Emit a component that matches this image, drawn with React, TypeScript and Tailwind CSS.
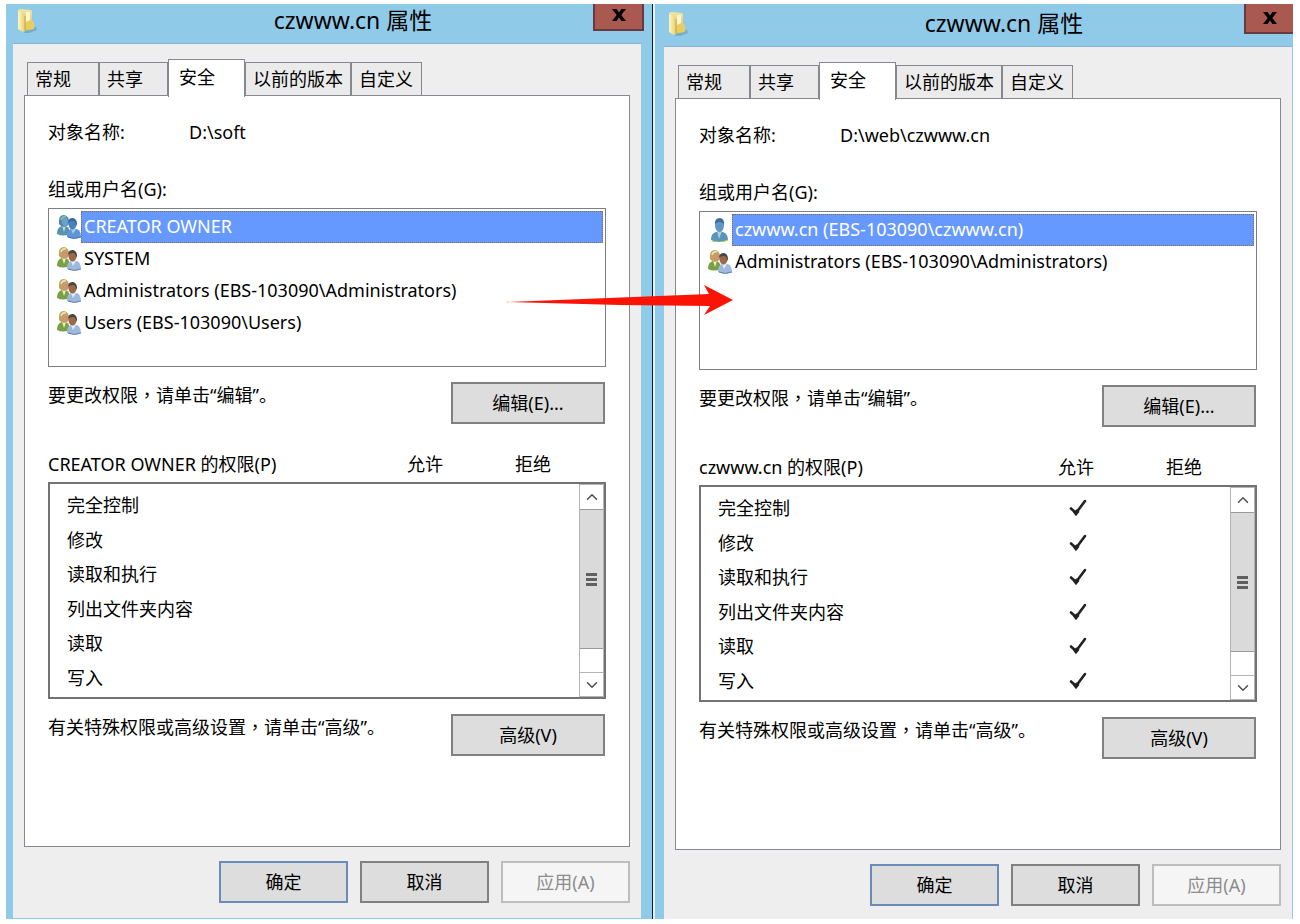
import React from "react";
import { ChevronDown, ChevronUp } from "lucide-react";
import clsx from "clsx";

const tabs = [
  { name: "常规", style: "w-[72px]" },
  { name: "共享", style: "w-[69px]" },
  { name: "安全", style: "w-[77px]" },
  { name: "以前的版本", style: "w-[106px]" },
  { name: "自定义", style: "w-[71px]" },
];

const permissions = ["完全控制", "修改", "读取和执行", "列出文件夹内容", "读取", "写入"];

function Folder() {
  return (
    <svg viewBox="0 0 20 26" className="w-5 h-[26px] mt-1 shrink-0">
      <defs>
        <linearGradient id="folderFront" x1="0" x2="1">
          <stop offset="0" stopColor="#fdf7c4" />
          <stop offset="1" stopColor="#e6cf6c" />
        </linearGradient>
        <linearGradient id="folderBack" x1="0" x2="0" y1="0" y2="1">
          <stop offset="0" stopColor="#f2e6a4" />
          <stop offset="1" stopColor="#d9b84a" />
        </linearGradient>
      </defs>
      <path d="M9 21 L19 19 L20 22 L12 25 L7 25Z" fill="#5b8fae" opacity=".5" />
      <path d="M1 3 Q1 1 3 1 L14 2 Q15 2 15 4 L15 13 L17 14 L17 21 L6 23 L1 21Z" fill="url(#folderBack)" />
      <path d="M9 4 L13 4 L13 12 L9 14Z" fill="#fbf6cf" />
      <path d="M1 3 L6 5 Q8 6 8 8 L8 22 L6 24 L1 21Z" fill="url(#folderFront)" />
      <path d="M8 8 L8 22" stroke="#c9a844" strokeWidth="1" />
      <path d="M9 15 L14 13 L17 14 L17 21 L9 22Z" fill="#e9cd62" />
    </svg>
  );
}

function Group({ faded }: { faded?: boolean }) {
  return (
    <svg viewBox="0 0 24 24" className="w-6 h-6 shrink-0">
      <path d="M0 19 Q0 12 5 11 L9 11 Q13 13 13 19 Q6 22 0 19Z" fill={faded ? "#5b93ac" : "#7a9f45"} />
      <path d="M5 11 L7 17 L9 11Z" fill={faded ? "#b5d6e8" : "#e9efd0"} />
      <path d="M2 9 Q1 0 7 0 Q13 1 12 9 Q10 12 7 12 Q4 12 2 9Z" fill={faded ? "#5088a8" : "#bfa45c"} />
      <ellipse cx="8" cy="7" rx="3" ry="4" fill={faded ? "#6ba2cc" : "#c99872"} />
      <path d="M4 5 Q5 1 9 2" fill="none" stroke={faded ? "#93c2a8" : "#f0e6b4"} strokeWidth="1.500" />
      <path d="M10 22 Q10 15 14 14 L20 14 Q24 16 24 22 Q17 25 10 22Z" fill={faded ? "#5d95d8" : "#9db9e0"} />
      <path d="M11 22 Q17 25 24 22" fill="none" stroke={faded ? "#3f74b4" : "#6480a8"} strokeWidth="1" />
      <path d="M14 14 L16 19 L19 14Z" fill={faded ? "#a4cdf2" : "#e6eefa"} />
      <ellipse cx="15.500" cy="9" rx="4" ry="5.500" fill={faded ? "#4a82bd" : "#9a6a4c"} />
      <path d="M11 8 Q11 3 16 3 Q20 4 20 9 L19 11 Q19 6 16 6 Q12 6 11 8Z" fill={faded ? "#33689c" : "#4a4540"} />
    </svg>
  );
}

function User() {
  return (
    <svg viewBox="0 0 24 24" className="w-6 h-6 shrink-0">
      <path d="M3 22 Q3 15 8 14 L15 14 Q20 16 20 22 Q11 26 3 22Z" fill="#5b95b8" />
      <path d="M4 23 Q11 26 20 22" fill="none" stroke="#a5d84a" strokeWidth="1" />
      <path d="M9 13 L11 21 L14 13Z" fill="#a9d0e8" />
      <ellipse cx="11.500" cy="7.500" rx="4.500" ry="6.500" fill="#5f97c4" />
      <path d="M7 7 Q6 0 12 0 Q17 1 16 7 Q15 4 11 4 Q8 4 7 7Z" fill="#3f6f96" />
    </svg>
  );
}

function Check() {
  return (
    <svg viewBox="0 0 18 18" className="w-[18px] h-[18px] mx-auto" role="img" aria-label="允许">
      <path d="M2 9.500 L7 14 L16 2" fill="none" stroke="#222" strokeWidth="2.600" strokeLinecap="round" />
      <path d="M5.500 12 L7 14 L9 11.500" fill="none" stroke="#222" strokeWidth="4" />
    </svg>
  );
}

// the full-width comma sits in the middle of its cell
function Comma() {
  return <span className="font-['Noto_Sans_CJK_TC',sans-serif]">，</span>;
}

type DialogProps = {
  id: string;
  path: string;
  users: { name: string; icon: React.ReactNode }[];
  allowed: boolean;
  owner: string;
  className: string;
  header: string;
  close: string;
};

function Dialog({ id, path, users, allowed, owner, className, header, close }: DialogProps) {
  return (
    <section className={clsx("flex-1 flex flex-col overflow-hidden bg-[#90cae9]", className)}>
      <header className={clsx("flex items-start pl-1", header)}>
        <Folder />
        <h1 className="flex-1 pl-[76px] text-center text-[23px] leading-8">czwww.cn 属性</h1>
        <button
          aria-label="关闭"
          className={clsx("w-[51px] -mr-[3px] flex justify-center border-2 border-t-0 border-[#673a41] bg-[#a9594f]", close)}
        >
          <svg viewBox="0 0 14 12" className="w-[14px] h-3">
            <path d="M0 0h4.500l2.500 3.500L9.500 0H14L9.300 6 14 12H9.500L7 8.400 4.500 12H0l4.700-6z" fill="#000" />
          </svg>
        </button>
      </header>

      <div className="flex-1 bg-[#eeeeee] border-t border-[#8fb1d0] px-[11px] pt-[15px] pb-[13px]">
        <div role="tablist" className="flex items-end pl-[3px]">
          {tabs.map((tab) => (
            <button
              key={tab.name}
              role="tab"
              aria-selected={tab.name === "安全"}
              className={clsx(
                "border border-b-0 border-[#85888f] text-left whitespace-nowrap",
                tab.style,
                tab.name === "安全"
                  ? "relative z-10 h-[38px] -mb-[2px] pl-[10px] pb-1 bg-white"
                  : "h-[33px] pl-[7px] bg-[#ebebeb]"
              )}
            >
              {tab.name}
            </button>
          ))}
        </div>

        <div className="border border-[#85888f] bg-white pt-6 px-[23px] pb-[90px]">
          <div className="flex">
            <p className="w-[141px]">对象名称:</p>
            <p>{path}</p>
          </div>

          <p id={id + "-users"} className="mt-[33px]">组或用户名(G):</p>
          <ul role="listbox" aria-labelledby={id + "-users"} className="h-[159px] mt-[7px] py-[2px] pl-2 pr-[2px] border border-[#7c7f86]">
            {users.map((user, i) => (
              <li key={user.name} role="option" aria-selected={i === 0} className="flex items-center h-[32px]">
                {user.icon}
                <span
                  className={clsx(
                    "flex-1 h-full pl-[2px] border border-dotted leading-[29px]",
                    i === 0 ? "bg-[#6699ff] border-[#8a6a50] text-white" : "border-transparent"
                  )}
                >
                  {user.name}
                </span>
              </li>
            ))}
          </ul>

          <div className="flex justify-between items-start mt-[15px] pr-[1px]">
            <p>要更改权限<Comma />请单击“编辑”。</p>
            <button className="w-[154px] h-[42px] border-2 border-[#808080] bg-[#dddddd]">编辑(E)...</button>
          </div>

          <div className="flex mt-7 pr-[19px]">
            <p id={id + "-perms"} className="flex-1">{owner} 的权限(P)</p>
            <p className="w-[108px] text-center">允许</p>
            <p className="w-[108px] text-center">拒绝</p>
          </div>
          <div className="flex h-[217px] mt-[6px] border-2 border-[#717377]">
            <table aria-labelledby={id + "-perms"} className="flex-1 h-[207px] mt-1 table-fixed">
              <tbody className="flex flex-col h-full">
                {permissions.map((permission) => (
                  <tr key={permission} className="flex flex-1 items-center">
                    <th scope="row" className="flex-1 pl-[17px] text-left font-normal">{permission}</th>
                    <td className="w-[108px]">{allowed && <Check />}</td>
                    <td className="w-[98px]" />
                  </tr>
                ))}
              </tbody>
            </table>
            <div className="flex flex-col w-[25px] border border-[#b4b4b4] text-[#505050]">
              <button aria-label="向上" className="flex items-center justify-center h-6">
                <ChevronUp className="w-[18px] h-[18px]" />
              </button>
              <div className="h-[140px] flex flex-col items-center justify-center gap-[2px] border-y border-[#9a9a9a] bg-[#dadada]">
                <span className="w-[11px] h-[3px] bg-[#606060]" />
                <span className="w-[11px] h-[3px] bg-[#606060]" />
                <span className="w-[11px] h-[3px] bg-[#606060]" />
              </div>
              <button aria-label="向下" className="flex items-center justify-center h-6 mt-auto border-t border-[#b4b4b4]">
                <ChevronDown className="w-[18px] h-[18px]" />
              </button>
            </div>
          </div>

          <div className="flex justify-between items-start mt-[15px] pr-[1px]">
            <p>有关特殊权限或高级设置<Comma />请单击“高级”。</p>
            <button className="w-[154px] h-[42px] border-2 border-[#808080] bg-[#dddddd]">高级(V)</button>
          </div>
        </div>

        <div className="flex justify-end gap-3 mt-[14px]">
          <button className="w-[129px] h-[42px] border-2 border-[#6a8cba] bg-[#dddddd]">确定</button>
          <button className="w-[129px] h-[42px] border-2 border-[#808080] bg-[#dddddd]">取消</button>
          <button disabled className="w-[129px] h-[42px] border-2 border-[#bcbdbe] bg-[#f5f5f5] text-[#8c8c8c]">应用(A)</button>
        </div>
      </div>
    </section>
  );
}

export default function App() {
  return (
    <main className="relative flex bg-white pt-1 pl-[6px] pr-[7px] pb-[5px] text-[18px] leading-6 text-black font-['Noto_Sans','Noto_Sans_CJK_SC',sans-serif]">
      <Dialog
        id="soft"
        path="D:\soft"
        owner="CREATOR OWNER"
        allowed={false}
        className="pl-[7px] pr-[11px] pb-[1px]"
        header="h-[39px]"
        close="h-[27px] pt-[5px]"
        users={[
          { name: "CREATOR OWNER", icon: <Group faded /> },
          { name: "SYSTEM", icon: <Group /> },
          { name: "Administrators (EBS-103090\\Administrators)", icon: <Group /> },
          { name: "Users (EBS-103090\\Users)", icon: <Group /> },
        ]}
      />
      <div className="w-[3px] border-l border-[#101c24] bg-[#e4f1f8]" />
      <Dialog
        id="web"
        path="D:\web\czwww.cn"
        owner="czwww.cn"
        allowed
        className="pl-[9px] pr-[1px]"
        header="h-[42px] pt-[3px]"
        close="h-[30px] -mt-[3px] pt-2"
        users={[
          { name: "czwww.cn (EBS-103090\\czwww.cn)", icon: <User /> },
          { name: "Administrators (EBS-103090\\Administrators)", icon: <Group /> },
        ]}
      />

      <svg viewBox="0 0 228 32" className="absolute z-20 top-[284px] left-[505px] w-[228px] h-8">
        <path d="M0 18 L204 10 L199 1 L228 16 L199 31 L205 22 L115 21 Z" fill="#fb1305" />
      </svg>
    </main>
  );
}
